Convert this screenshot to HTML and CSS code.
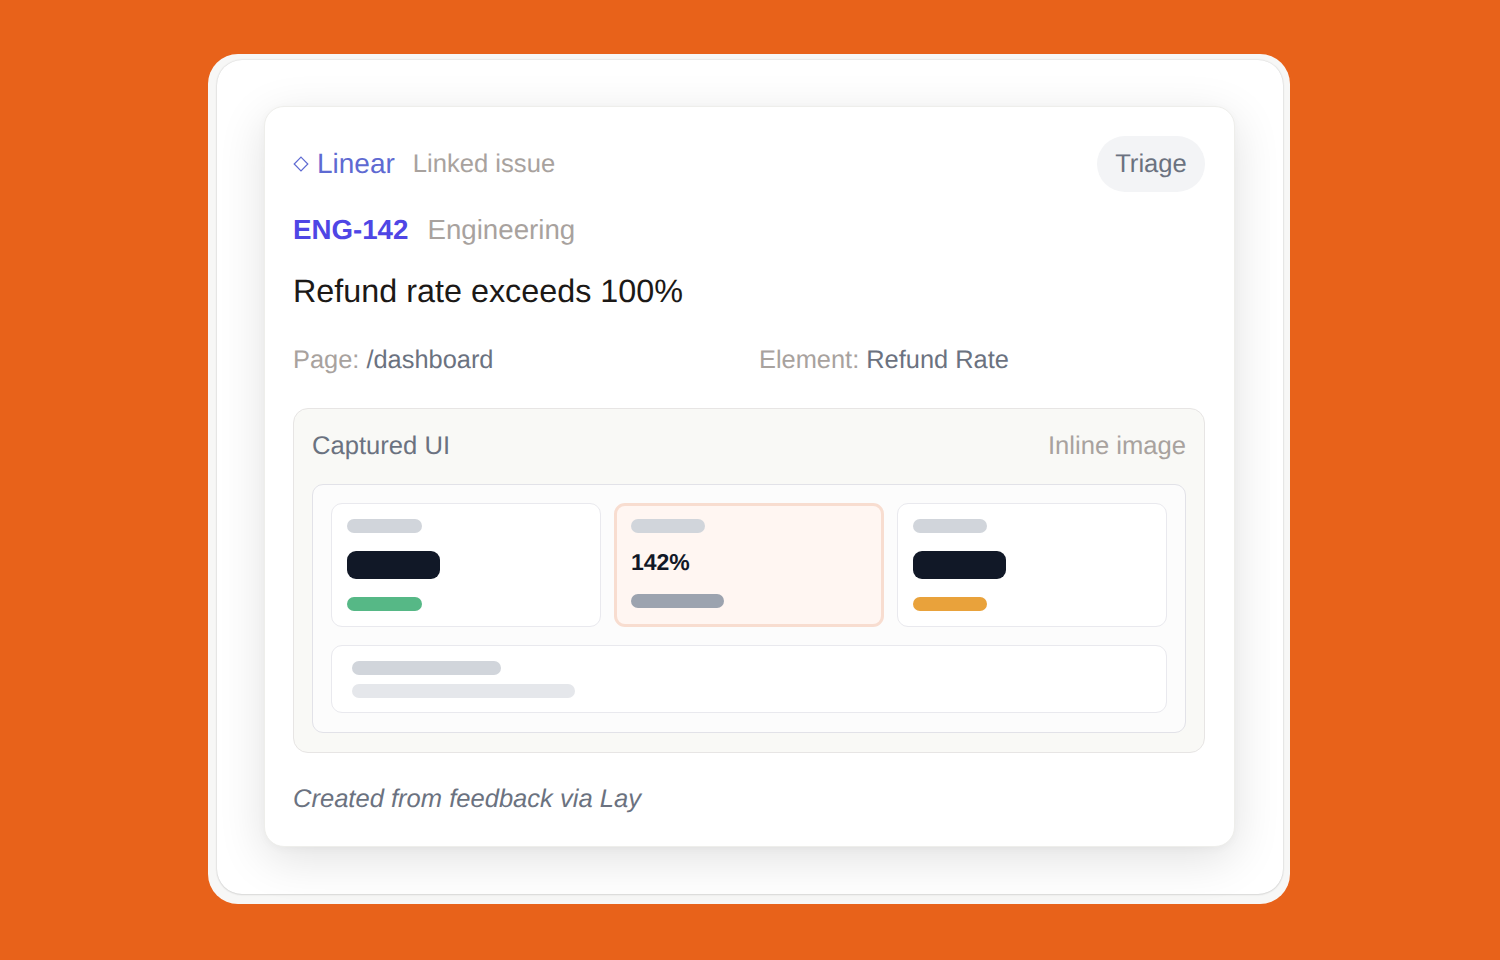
FILE: index.html
```html
<!DOCTYPE html>
<html lang="en">
<head>
  <meta charset="UTF-8">
  <title>Linked issue</title>
  <link rel="stylesheet" href="styles.css">
</head>
<body>
  <div class="frame">
    <div class="panel">
      <div class="card">
        <div class="card-top">
          <div class="source">
            <svg class="diamond" width="16" height="16" viewBox="0 0 16 16"><path d="M8 1.2 14.8 8 8 14.8 1.2 8Z" fill="none" stroke="#5e6ad2" stroke-width="1.2"/></svg>
            <span class="source-name">Linear</span>
            <span class="source-note">Linked issue</span>
          </div>
          <span class="pill">Triage</span>
        </div>

        <div class="issue-id">
          <strong>ENG-142</strong>
          <span>Engineering</span>
        </div>
        <h2>Refund rate exceeds 100%</h2>

        <div class="meta">
          <div><span class="label">Page:</span> <span class="value-muted">/dashboard</span></div>
          <div><span class="label">Element:</span> <span class="value-muted">Refund Rate</span></div>
        </div>

        <div class="capture">
          <div class="capture-head">
            <span>Captured UI</span>
            <span class="capture-note">Inline image</span>
          </div>
          <div class="preview">
            <div class="tiles">
              <div class="tile">
                <div class="bar bar-label"></div>
                <div class="bar bar-dark"></div>
                <div class="bar bar-green"></div>
              </div>
              <div class="tile tile-hot">
                <div class="bar bar-label"></div>
                <div class="tile-value">142%</div>
                <div class="bar bar-gray"></div>
              </div>
              <div class="tile">
                <div class="bar bar-label"></div>
                <div class="bar bar-dark"></div>
                <div class="bar bar-amber"></div>
              </div>
            </div>
            <div class="wide-row">
              <div class="bar bar-line1"></div>
              <div class="bar bar-line2"></div>
            </div>
          </div>
        </div>

        <p class="note">Created from feedback via Lay</p>
      </div>
    </div>
  </div>
</body>
</html>
```

FILE: styles.css
```css
* {
  margin: 0;
  padding: 0;
  box-sizing: border-box;
}

html, body {
  height: 100%;
  overflow: hidden;
}

body {
  background: #e8621a;
  font-family: "Liberation Sans", Arial, sans-serif;
  color: #1c1917;
  padding: 54px 0 0 208px;
  text-rendering: geometricPrecision;
}

/* Outer frame */
.frame {
  width: 1082px;
  height: 850px;
  padding: 6px 7px 10px 9px;
  background: #f7f7f6;
  border-radius: 30px;
}

.panel {
  height: 100%;
  padding: 46px 48px 47px 47px;
  background: #fff;
  border-radius: 25px;
  box-shadow: 0 0 2px rgba(0, 0, 0, 0.18), 0 1px 2px rgba(0, 0, 0, 0.08);
}

.card {
  height: 741px;
  padding: 29px 29px 0 28px;
  background: #fff;
  border: 1px solid #eeeeeb;
  border-radius: 20px;
  box-shadow: 0 12px 48px rgba(0, 0, 0, 0.12), 0 2px 8px rgba(0, 0, 0, 0.03);
}

/* Header row */
.card-top {
  display: flex;
  justify-content: space-between;
  align-items: center;
  height: 56px;
}

.source {
  display: flex;
  align-items: center;
}

.diamond {
  margin-right: 8px;
}

.source-name {
  font-size: 28px;
  color: #5e6ad2;
  margin-right: 18px;
}

.source-note {
  font-size: 25.6px;
  color: #a8a29e;
}

.pill {
  width: 108px;
  height: 56px;
  line-height: 56px;
  text-align: center;
  font-size: 25.6px;
  color: #6b7280;
  background: #f3f4f6;
  border-radius: 28px;
}

.issue-id {
  display: flex;
  gap: 19px;
  margin-top: 20px;
  height: 36px;
  line-height: 36px;
  font-size: 27.7px;
  color: #a8a29e;
}

.issue-id strong {
  color: #4f46e5;
}

h2 {
  margin-top: 23px;
  height: 40px;
  line-height: 40px;
  font-size: 32.35px;
  font-weight: 400;
  color: #1c1917;
}

.meta {
  display: grid;
  grid-template-columns: 1fr 1fr;
  gap: 20px;
  margin-top: 31px;
  height: 36px;
  line-height: 36px;
  font-size: 25.4px;
}

.label {
  color: #a8a29e;
}

.value-muted {
  color: #6b7280;
}

/* Captured UI block */
.capture {
  margin-top: 30px;
  height: 345px;
  padding: 18px 18px 0;
  background: #f9f9f6;
  border: 1px solid #e7e5e4;
  border-radius: 15px;
}

.capture-head {
  display: flex;
  justify-content: space-between;
  height: 38px;
  line-height: 38px;
  font-size: 25.6px;
  color: #6b7280;
}

.capture-note {
  color: #a8a29e;
}

.preview {
  margin-top: 19px;
  height: 249px;
  padding: 18px;
  background: #fcfcfc;
  border: 1px solid #e2e2e8;
  border-radius: 11px;
}

.tiles {
  display: grid;
  grid-template-columns: repeat(3, 1fr);
  gap: 13px;
  height: 124px;
}

.tile {
  display: flex;
  flex-direction: column;
  align-items: flex-start;
  gap: 18px;
  padding: 15px;
  background: #fff;
  border: 1px solid #e9e9ee;
  border-radius: 11px;
}

.tile-hot {
  padding: 13px 14px;
  gap: 0;
  background: #fff6f2;
  border: 3px solid #f8ddd0;
}

.tile-value {
  height: 61px;
  line-height: 58px;
  font-size: 23px;
  font-weight: 700;
  color: #111827;
}

.bar {
  border-radius: 7px;
  height: 14px;
  width: 75px;
  background: #d1d5db;
}

.tile-hot .bar-label,
.tile:last-child .bar-label {
  width: 73.5px;
}

.bar-dark {
  width: 93px;
  height: 28px;
  border-radius: 9px;
  background: #111827;
}

.bar-green {
  background: #56b886;
}

.bar-amber {
  width: 73.5px;
  background: #e9a23b;
}

.bar-gray {
  width: 93px;
  background: #9ca3af;
}

.wide-row {
  margin-top: 18px;
  height: 68px;
  padding: 15px 20px;
  background: #fff;
  border: 1px solid #e9e9ee;
  border-radius: 11px;
}

.bar-line1 {
  width: 149px;
}

.bar-line2 {
  width: 223px;
  margin-top: 9px;
  background: #e5e7eb;
}

.note {
  margin-top: 28px;
  height: 36px;
  line-height: 36px;
  font-size: 25.55px;
  font-style: italic;
  color: #6b7280;
}
```
